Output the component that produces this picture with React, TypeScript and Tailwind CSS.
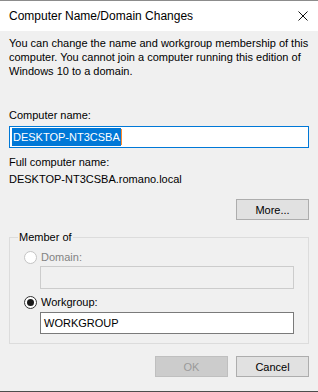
import React from 'react';

const font = { fontFamily: '"Liberation Sans", Arial, sans-serif' };

const Radio = ({ checked, disabled }: { checked?: boolean; disabled?: boolean }) => (
  <span
    className={
      'flex h-[13px] w-[13px] items-center justify-center rounded-full border bg-white ' +
      (disabled ? 'border-[#c4c4c4]' : 'border-[#333333]')
    }
  >
    {checked && <span className="h-[7px] w-[7px] rounded-full bg-[#1a1a1a]" />}
  </span>
);

const Button = ({ label, disabled }: { label: string; disabled?: boolean }) => (
  <button
    className={
      'flex h-[21px] w-[73px] items-center justify-center border text-[11px] ' +
      (disabled
        ? 'border-[#bfbfbf] bg-[#cccccc] text-[#9a9a9a]'
        : 'border-[#adadad] bg-[#e1e1e1] text-black')
    }
  >
    {label}
  </button>
);

export default function App() {
  return (
    <div
      className="flex h-[392px] w-[318px] flex-col border-t border-b border-t-[#8c8c8c] border-b-[#4d4d4d] bg-[#f0f0f0] text-[11px] leading-[14px] text-black"
      style={font}
    >
      {/* title bar */}
      <div className="flex h-[30px] shrink-0 items-center justify-between bg-white pl-[9px] pr-[9px]">
        <span className="text-[12px]">Computer Name/Domain Changes</span>
        <svg width="10" height="10" viewBox="0 0 10 10" className="mr-[1px]">
          <path d="M0.5 0.5L9.5 9.5M9.5 0.5L0.5 9.5" stroke="#111" strokeWidth="1" />
        </svg>
      </div>

      <div className="flex flex-1 flex-col px-[9px]">
        <p className="mt-[5px]">
          You can change the name and workgroup membership of this computer. You cannot join a
          computer running this edition of Windows 10 to a domain.
        </p>

        <div className="mt-[30px]">Computer name:</div>
        <div className="mt-[4px] flex h-[22px] items-center border border-[#0078d7] bg-white pl-[2px]">
          <span className="bg-[#0078d7] px-[1px] leading-[18px] text-white">DESKTOP-NT3CSBA</span>
          <span className="h-[16px] w-[1px] bg-[#ff8a2a]" />
        </div>

        <div className="mt-[7px]">Full computer name:</div>
        <div className="mt-[3px]">DESKTOP-NT3CSBA.romano.local</div>

        <div className="mt-[13px] flex justify-end">
          <Button label="More..." />
        </div>

        <fieldset className="mt-[10px] border border-[#dcdcdc] px-0 pb-[9px]">
          <legend className="ml-[8px] px-[1px] leading-[14px]">Member of</legend>
          <div className="pl-[14px] pr-[14px]">
            <div className="mt-[6px] flex items-center gap-[4px] text-[#838383]">
              <Radio disabled />
              <span>Domain:</span>
            </div>
            <div className="ml-[16px] mt-[2px] h-[23px] border border-[#cccccc] bg-[#f0f0f0]" />
            <div className="mt-[6px] flex items-center gap-[4px]">
              <Radio checked />
              <span>Workgroup:</span>
            </div>
            <div className="ml-[16px] mt-[3px] flex h-[22px] items-center border border-[#7a7a7a] bg-white pl-[3px]">
              WORKGROUP
            </div>
          </div>
        </fieldset>

        <div className="mt-[12px] flex justify-end gap-[8px]">
          <Button label="OK" disabled />
          <Button label="Cancel" />
        </div>
      </div>
    </div>
  );
}
